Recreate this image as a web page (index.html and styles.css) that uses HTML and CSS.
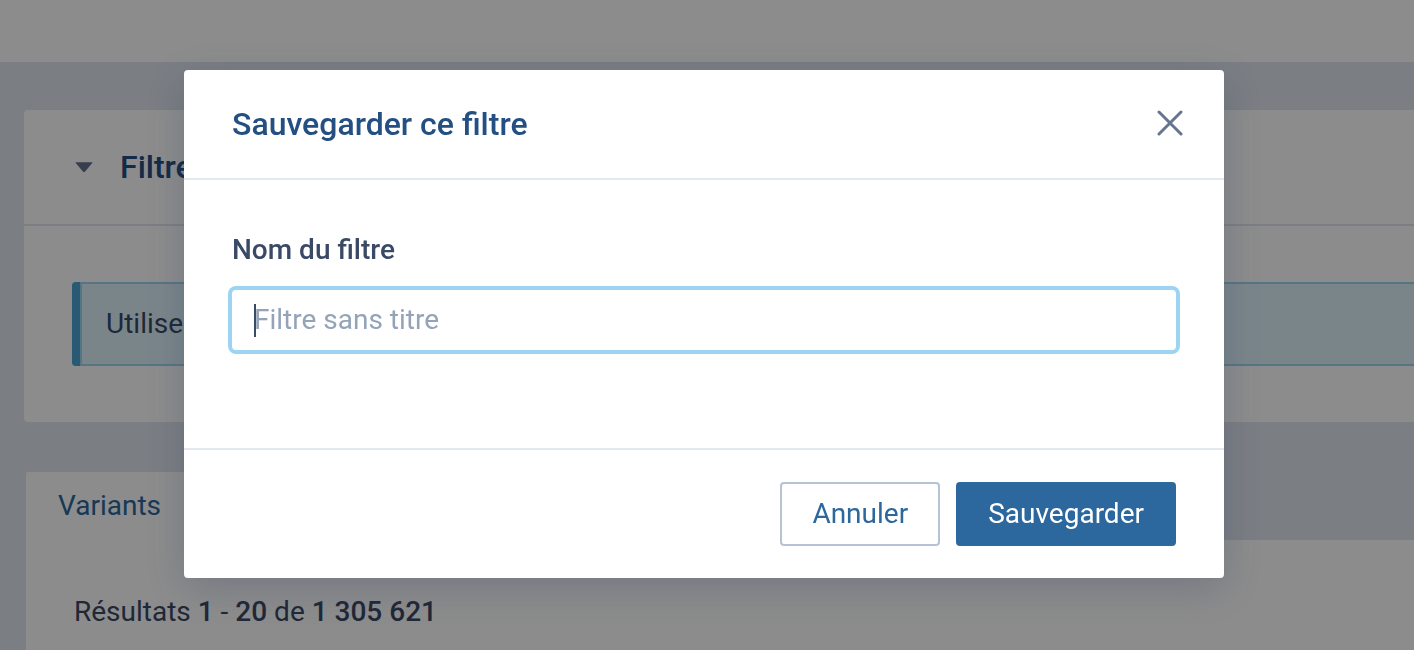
FILE: index.html
```html
<!DOCTYPE html>
<html lang="fr">
<head>
<meta charset="utf-8">
<meta name="viewport" content="width=device-width, initial-scale=1">
<title>Sauvegarder ce filtre</title>
<link rel="stylesheet" href="styles.css">
</head>
<body>
<div class="app">
  <header class="topbar"></header>
  <main class="page">
    <section class="card">
      <div class="card-header">
        <svg class="arrow" viewBox="0 0 18 12" aria-hidden="true"><path d="M1 1.3h16q.8 0 .3.7l-7.4 8.8q-.9.9-1.8 0L.7 2q-.5-.7.3-.7z"/></svg>
        <h2 class="title">Filtre</h2>
      </div>
      <div class="card-body">
        <div class="notice">Utilise</div>
      </div>
    </section>
    <section class="results">
      <nav class="tabs"><a class="tab" href="#variants">Variants</a></nav>
      <div class="panel" id="variants">
        <p class="summary">Résultats <b>1</b> - <b>20</b> de <b>1 305 621</b></p>
      </div>
    </section>
  </main>
</div>
<div class="overlay">
  <form class="dialog" role="dialog" aria-modal="true" aria-labelledby="dialog-title">
    <div class="dialog-header">
      <h1 class="title" id="dialog-title">Sauvegarder ce filtre</h1>
      <button class="close" type="button" aria-label="Fermer">
        <svg viewBox="0 0 28 28" aria-hidden="true"><path d="M3 2l22 22M25 2L3 24"/></svg>
      </button>
    </div>
    <div class="dialog-body">
      <label class="label" for="filter-name">Nom du filtre</label>
      <div class="field">
        <input class="input" id="filter-name" type="text" placeholder="Filtre sans titre">
        <span class="cursor"></span>
      </div>
    </div>
    <div class="dialog-footer">
      <button class="button" type="button">Annuler</button>
      <button class="button button-primary" type="submit">Sauvegarder</button>
    </div>
  </form>
</div>
</body>
</html>
```
FILE: styles.css
```css
* {
  box-sizing: border-box;
}

body {
  margin: 0;
  color: #3a4965;
  background: #e0e5ee;
  font: 400 28px/44px Roboto, "Noto Sans", sans-serif;
}

.app {
  display: flex;
  flex-direction: column;
  height: 100vh;
  overflow: hidden;
}

.topbar {
  flex: none;
  height: 62px;
  background: #fff;
}

.page {
  display: flex;
  flex: 1;
  flex-direction: column;
  gap: 50px;
  padding: 48px 0 0 24px;
}

.card {
  flex: none;
  background: #fff;
  border-radius: 4px 0 0 4px;
}

.card-header {
  display: flex;
  align-items: center;
  gap: 27px;
  padding: 35px 51px;
  border-bottom: 2px solid #e0e5ee;
}

.arrow {
  width: 18px;
  height: 12px;
  fill: #64748f;
}

.title {
  margin: 0;
  color: #234f83;
  font-size: 32px;
  font-weight: 500;
}

.card-body {
  padding: 56px 0 56px 48px;
}

.notice {
  position: relative;
  padding: 18px 24px 18px 32px;
  background: #dff2fb;
  border: 2px solid #9bd5f1;
  border-right: 0;
  border-radius: 4px 0 0 4px;
}

.notice::before {
  position: absolute;
  inset: -2px auto -2px -2px;
  width: 8px;
  background: #4da3d4;
  border-right: 2px solid #9bd5f1;
  border-radius: 4px 0 0 4px;
  content: "";
}

.results {
  display: flex;
  flex: 1;
  flex-direction: column;
  padding-left: 2px;
}

.tabs {
  display: flex;
}

.tab {
  min-width: 240px;
  padding: 12px 32px;
  color: #2c679d;
  background: #fff;
  border-radius: 2px 2px 0 0;
  text-decoration: none;
}

.panel {
  flex: 1;
  padding: 50px 48px;
  background: #fff;
}

.summary {
  margin: 0;
}

.summary b {
  font-weight: 500;
}

.overlay {
  position: fixed;
  inset: 0;
  display: flex;
  align-items: flex-start;
  justify-content: center;
  padding: 70px 6px 0 0;
  background: rgba(0, 0, 0, 0.45);
}

.dialog {
  width: 100%;
  max-width: 1040px;
  background: #fff;
  border-radius: 4px;
  box-shadow: 0 10px 40px rgba(40, 55, 90, 0.25);
}

.dialog-header {
  display: flex;
  align-items: center;
  justify-content: space-between;
  padding: 32px 40px 32px 48px;
  border-bottom: 2px solid #e2e8f0;
}

.close {
  display: flex;
  padding: 0;
  background: none;
  border: 0;
}

.close svg {
  width: 28px;
  height: 28px;
  fill: none;
  stroke: #66758f;
  stroke-width: 3;
  stroke-linecap: round;
}

.dialog-body {
  padding: 48px 48px 98px;
}

.label {
  display: block;
  margin-bottom: 18px;
  font-weight: 500;
}

.field {
  position: relative;
}

.input {
  display: block;
  width: 100%;
  height: 60px;
  padding: 0 22px 2px;
  color: #3a4965;
  background: #fff;
  border: 0;
  border-radius: 4px;
  outline: 0;
  box-shadow: 0 0 0 4px #9bd5f1;
  font: inherit;
}

.input::placeholder {
  color: #94a3b8;
  opacity: 1;
}

.cursor {
  position: absolute;
  top: 14px;
  left: 22px;
  width: 2px;
  height: 33px;
  background: #3a4965;
}

.input:focus + .cursor {
  display: none;
}

.dialog-footer {
  display: flex;
  justify-content: flex-end;
  gap: 16px;
  padding: 32px 48px;
  border-top: 2px solid #e2e8f0;
}

.button {
  height: 64px;
  padding: 0 30px;
  color: #2c679d;
  background: #fff;
  border: 2px solid #b6c2d6;
  border-radius: 4px;
  font: inherit;
}

.button-primary {
  color: #fff;
  background: #2c679d;
  border-color: #2c679d;
}
```
